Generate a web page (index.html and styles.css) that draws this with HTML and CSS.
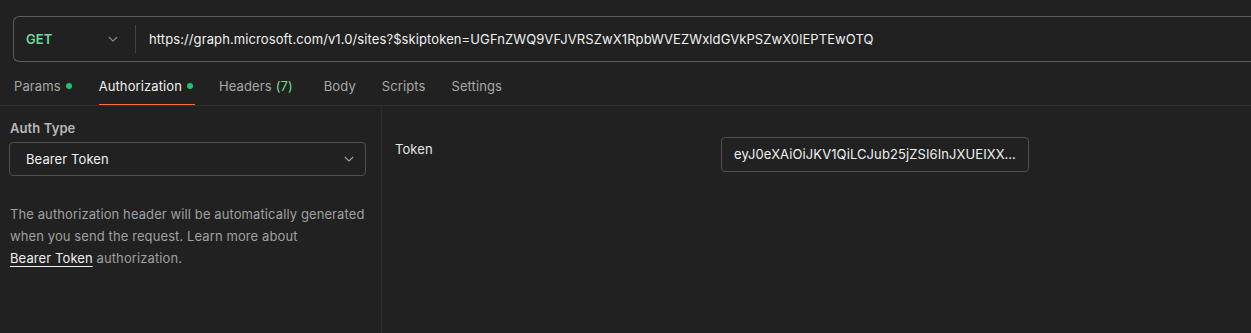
FILE: index.html
```html
<!DOCTYPE html>
<html>
<head>
<meta charset="utf-8">
<link rel="stylesheet" href="styles.css">
</head>
<body>
<div class="app">
  <div class="url-row">
    <div class="url-bar">
      <div class="method">
        <span class="method-name">GET</span>
        <svg class="chev" width="12" height="12" viewBox="0 0 12 12"><path d="M1.8 4 L6 8 L10.2 4" fill="none" stroke="#8c8c8c" stroke-width="1.1"/></svg>
      </div>
      <div class="url-sep"></div>
      <div class="url-text">https://graph.microsoft.com/v1.0/sites?$skiptoken=UGFnZWQ9VFJVRSZwX1RpbWVEZWxldGVkPSZwX0lEPTEwOTQ</div>
    </div>
  </div>
  <div class="tabs">
    <div class="tab">Params<span class="dot"></span></div>
    <div class="tab active">Authorization<span class="dot"></span></div>
    <div class="tab">Headers <span class="count">(7)</span></div>
    <div class="tab">Body</div>
    <div class="tab">Scripts</div>
    <div class="tab">Settings</div>
  </div>
  <div class="content">
    <div class="left">
      <div class="label">Auth Type</div>
      <div class="select">
        <span>Bearer Token</span>
        <svg class="chev" width="12" height="12" viewBox="0 0 12 12"><path d="M1.8 4 L6 8 L10.2 4" fill="none" stroke="#a0a0a0" stroke-width="1.1"/></svg>
      </div>
      <p class="desc">The authorization header will be automatically generated when you send the request. Learn more about <a class="link">Bearer Token</a> authorization.</p>
    </div>
    <div class="right">
      <div class="field">
        <div class="field-label">Token</div>
        <div class="token-input">eyJ0eXAiOiJKV1QiLCJub25jZSI6InJXUEIXX3dfb2t4</div>
      </div>
    </div>
  </div>
</div>
</body>
</html>
```
FILE: styles.css
```css
* { box-sizing: border-box; }
html, body { margin: 0; padding: 0; background: #212121; }
body {
  font-family: Inter, "Noto Sans", sans-serif;
  font-size: 13px;
  letter-spacing: 0.1px;
  color: #f0f0f0;
  width: 1251px;
  height: 333px;
  overflow: hidden;
}
.app { display: flex; flex-direction: column; height: 333px; }
.url-row { padding: 16px 0 0 13px; }
.url-bar {
  display: flex;
  align-items: center;
  height: 46px;
  border: 1px solid #5b5b5b;
  border-right: none;
  border-radius: 6px 0 0 6px;
}
.method {
  display: flex;
  align-items: center;
  justify-content: space-between;
  width: 110px;
  padding: 0 5px 0 12px;
}
.method-name { color: #6bdd9a; font-weight: 600; }
.url-sep { width: 1px; height: 28px; background: #444444; margin-left: 11px; }
.url-text { padding-left: 13px; color: #f0f0f0; white-space: nowrap; }
.tabs {
  display: flex;
  height: 44px;
  border-bottom: 1px solid #2e2e2e;
  padding-left: 14px;
}
.tab {
  display: flex;
  align-items: center;
  color: #a8a8a8;
  height: 100%;
  padding-top: 4px;
  position: relative;
}
.tab.active { color: #f0f0f0; }
.tab.active::after {
  content: "";
  position: absolute;
  left: 0; right: -2px; bottom: 0;
  height: 1px;
  background: #ff6c37;
}
.dot { width: 6px; height: 6px; border-radius: 50%; background: #1ec46a; margin-left: 5px; }
.count { color: #6bdd9a; margin-left: 4px; }
.tab:nth-child(1) { margin-right: 27px; }
.tab:nth-child(2) { margin-right: 26px; }
.tab:nth-child(3) { margin-right: 31px; }
.tab:nth-child(4) { margin-right: 26px; }
.tab:nth-child(5) { margin-right: 26px; }
.content { display: flex; flex: 1; }
.left {
  width: 382px;
  border-right: 1px solid #2e2e2e;
  padding: 14px 15px 0 9px;
}
.label { color: #b8b8b8; font-weight: 600; padding-left: 1px; }
.select {
  margin-top: 6px;
  height: 34px;
  border: 1px solid #4f4f4f;
  border-radius: 4px;
  display: flex;
  align-items: center;
  justify-content: space-between;
  padding: 0 10px 0 16px;
  color: #f0f0f0;
}
.desc {
  margin: 27px 0 0 1px;
  color: #a0a0a0;
  line-height: 22px;
}
.link { color: #f0f0f0; text-decoration: underline; text-underline-offset: 3px; white-space: nowrap; }
.right { flex: 1; padding: 31px 0 0 13px; }
.field { display: flex; align-items: flex-start; }
.field-label { width: 326px; padding-top: 4px; color: #e6e6e6; }
.token-input {
  width: 308px;
  height: 35px;
  border: 1px solid #4f4f4f;
  border-radius: 4px;
  padding: 0 12px;
  white-space: nowrap;
  overflow: hidden;
  text-overflow: ellipsis;
  color: #f0f0f0;
  line-height: 33px;
}
```
